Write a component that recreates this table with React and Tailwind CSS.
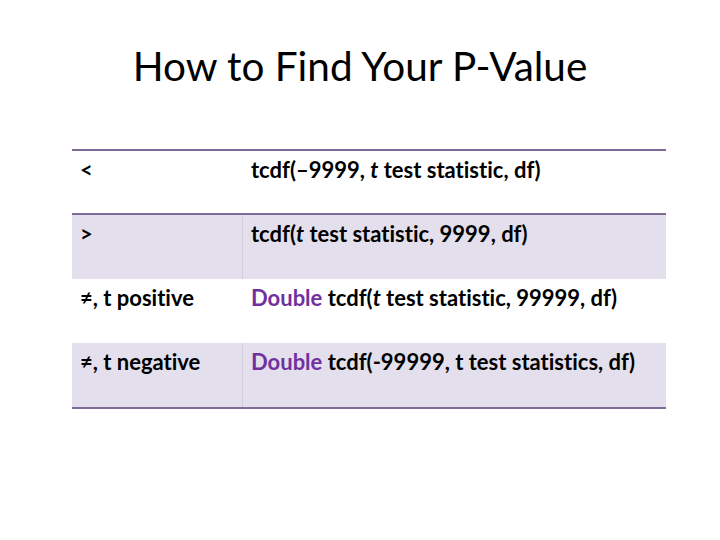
import React from "react"

const rows = [
  { op: "<", shaded: false, formula: <>tcdf(–9999, <i>t</i> test statistic, df)</> },
  { op: ">", shaded: true, formula: <>tcdf(<i>t</i> test statistic, 9999, df)</> },
  {
    op: "≠, t positive",
    shaded: false,
    formula: (
      <>
        <span className="text-[#7030a0]">Double</span> tcdf(<i>t</i> test statistic, 99999, df)
      </>
    ),
  },
  {
    op: "≠, t negative",
    shaded: true,
    formula: (
      <>
        <span className="text-[#7030a0]">Double</span> tcdf(-99999, t test statistics, df)
      </>
    ),
  },
]

const App = () => {
  return (
    <div className="w-[720px] h-[540px] bg-white font-['Lato',sans-serif] text-black [font-variant-ligatures:none]">
      {/* Title */}
      <div className="h-[149px] flex justify-center pt-[38px]">
        <h1 className="text-[40.5px] leading-[56px] font-normal">How to Find Your P-Value</h1>
      </div>

      {/* Table */}
      <div className="ml-[72px] w-[594px] border-t-2 border-b-2 border-[#7f6b97]">
        {rows.map((row, i) => (
          <div
            key={i}
            className={`flex h-[64px] text-[22px] font-bold leading-[28px] ${
              row.shaded ? "bg-[#e4dfec]" : "bg-white"
            } ${i === 0 ? "border-b-2 border-[#7f6b97]" : ""}`}
          >
            <div className="w-[170px] pl-[8px] pt-[5px]">{row.op}</div>
            <div
              className={`flex-1 pl-[8px] pt-[5px] border-l ${
                row.shaded ? "border-[#d3cddb]" : "border-transparent"
              }`}
            >
              {row.formula}
            </div>
          </div>
        ))}
      </div>
    </div>
  )
}

export default App
